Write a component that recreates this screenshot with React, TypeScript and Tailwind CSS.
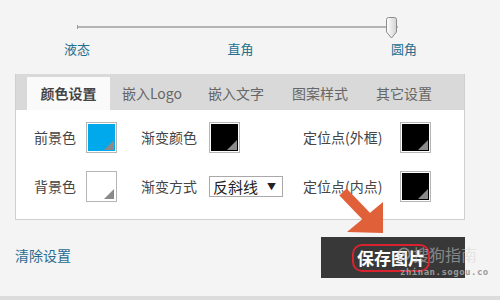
import React from 'react';

const Swatch = ({ color }: { color: string }) => (
  <div className="relative w-[31px] h-[31px] border border-[#b5b5b5] bg-white p-px">
    <div className="w-full h-full" style={{ background: color }} />
    <svg className="absolute right-[2px] bottom-[2px]" width="10" height="10" viewBox="0 0 10 10">
      <polygon points="10,0 10,10 0,10" fill="#8a8a8a" />
    </svg>
  </div>
);

const tabs = ['颜色设置', '嵌入Logo', '嵌入文字', '图案样式', '其它设置'];

const App = () => {
  return (
    <div className="relative w-[500px] h-[300px] overflow-hidden bg-[#f4f4f4] font-['Noto_Sans_CJK_SC',sans-serif]">
      {/* slider */}
      <div className="relative ml-[77px] w-[321px] pt-[26px]">
        <div className="h-[2px] bg-[#b4b4b4]" />
        <div className="absolute left-0 top-[25px] w-px h-[4px] bg-[#999]" />
        <svg className="absolute left-[308px] top-[17px]" width="13" height="22" viewBox="0 0 13 22">
          <defs>
            <linearGradient id="thumb" x1="0" y1="0" x2="1" y2="0">
              <stop offset="0" stopColor="#ffffff" />
              <stop offset="1" stopColor="#d2d2d2" />
            </linearGradient>
          </defs>
          <path d="M1.5 2.5 Q1.5 0.5 3.5 0.5 H9.5 Q11.5 0.5 11.5 2.5 V15 L6.5 21 L1.5 15 Z" fill="url(#thumb)" stroke="#8c8c8c" />
        </svg>
      </div>
      <div className="flex justify-between ml-[47px] w-[387px] mt-[13px] text-[13px] leading-[16px] text-[#23708f]">
        <span className="w-[60px] text-center">液态</span>
        <span className="w-[60px] text-center">直角</span>
        <span className="w-[60px] text-center">圆角</span>
      </div>

      {/* settings panel */}
      <div className="ml-[15px] mt-[17px] w-[450px] border border-[#cfcfcf] border-t-0 bg-white">
        <div className="flex h-[36px] pl-[11px] pt-[3px] bg-[#d9d9d9]">
          {tabs.map((t, i) => (
            <div
              key={t}
              className={
                i === 0
                  ? 'w-[83px] flex items-center justify-center bg-[#fafafa] text-[14px] font-bold text-[#444]'
                  : 'w-[84px] flex items-center justify-center text-[14px] text-[#666]'
              }
            >
              {t}
            </div>
          ))}
        </div>
        <div className="flex flex-col gap-[18px] pt-[12px] pb-[17px] pl-[18px] text-[14px] text-[#444]">
          <div className="flex items-center h-[31px]">
            <div className="flex items-center w-[107px]">
              <span className="w-[52px]">前景色</span>
              <Swatch color="#00a8ec" />
            </div>
            <div className="flex items-center w-[162px]">
              <span className="w-[68px]">渐变颜色</span>
              <Swatch color="#000000" />
            </div>
            <div className="flex items-center">
              <span className="w-[97px]">定位点(外框)</span>
              <Swatch color="#000000" />
            </div>
          </div>
          <div className="flex items-center h-[31px]">
            <div className="flex items-center w-[107px]">
              <span className="w-[52px]">背景色</span>
              <Swatch color="#ffffff" />
            </div>
            <div className="flex items-center w-[162px]">
              <span className="w-[68px]">渐变方式</span>
              <div className="flex items-center justify-between w-[74px] h-[21px] border border-[#a9a9a9] bg-white pl-[3px] pr-[6px]">
                <span className="text-[15px] leading-none text-[#222]">反斜线</span>
                <span className="text-[9px] text-[#222]">▼</span>
              </div>
            </div>
            <div className="flex items-center">
              <span className="w-[97px]">定位点(内点)</span>
              <Swatch color="#000000" />
            </div>
          </div>
        </div>
      </div>

      {/* bottom actions */}
      <div className="flex items-start justify-between ml-[15px] w-[450px] mt-[17px]">
        <span className="mt-[8px] text-[14px] text-[#2a6a90]">清除设置</span>
        <div className="relative w-[144px] h-[41px] bg-[#383838] flex items-center pl-[31px]">
          <div className="flex items-center justify-center w-[78px] h-[28px] rounded-[10px] border-[2.5px] border-[#d8232f]">
            <span className="text-[17px] font-bold text-white leading-none">保存图片</span>
          </div>
        </div>
      </div>

      {/* watermark */}
      <div className="absolute left-[397px] top-[246px] flex items-center gap-[2px] opacity-50">
        <svg width="14" height="14" viewBox="0 0 15 15">
          <circle cx="7.5" cy="7.5" r="6" fill="none" stroke="#cfcfcf" strokeWidth="2" />
          <circle cx="7.5" cy="7.5" r="2.5" fill="#cfcfcf" />
        </svg>
        <span className="text-[16px] leading-none text-[#d6d6d6]">搜狗指南</span>
      </div>
      <div className="absolute left-[400px] top-[268px] text-[9px] font-bold tracking-[0.5px] text-[#9a9a9a] font-['DejaVu_Sans_Mono',monospace] leading-none">
        zhinan.sogou.co
      </div>

      {/* arrow */}
      <svg className="absolute left-[335px] top-[185px]" width="55" height="55" viewBox="0 0 55 55">
        <line x1="8" y1="7" x2="33" y2="33" stroke="#e0603a" strokeWidth="10" />
        <polygon points="48,17 48,48 12,47" fill="#e0603a" />
      </svg>

      <div className="absolute left-0 bottom-0 w-full h-[4px] bg-[#dcdcdc]" />
    </div>
  );
};

export default App;
